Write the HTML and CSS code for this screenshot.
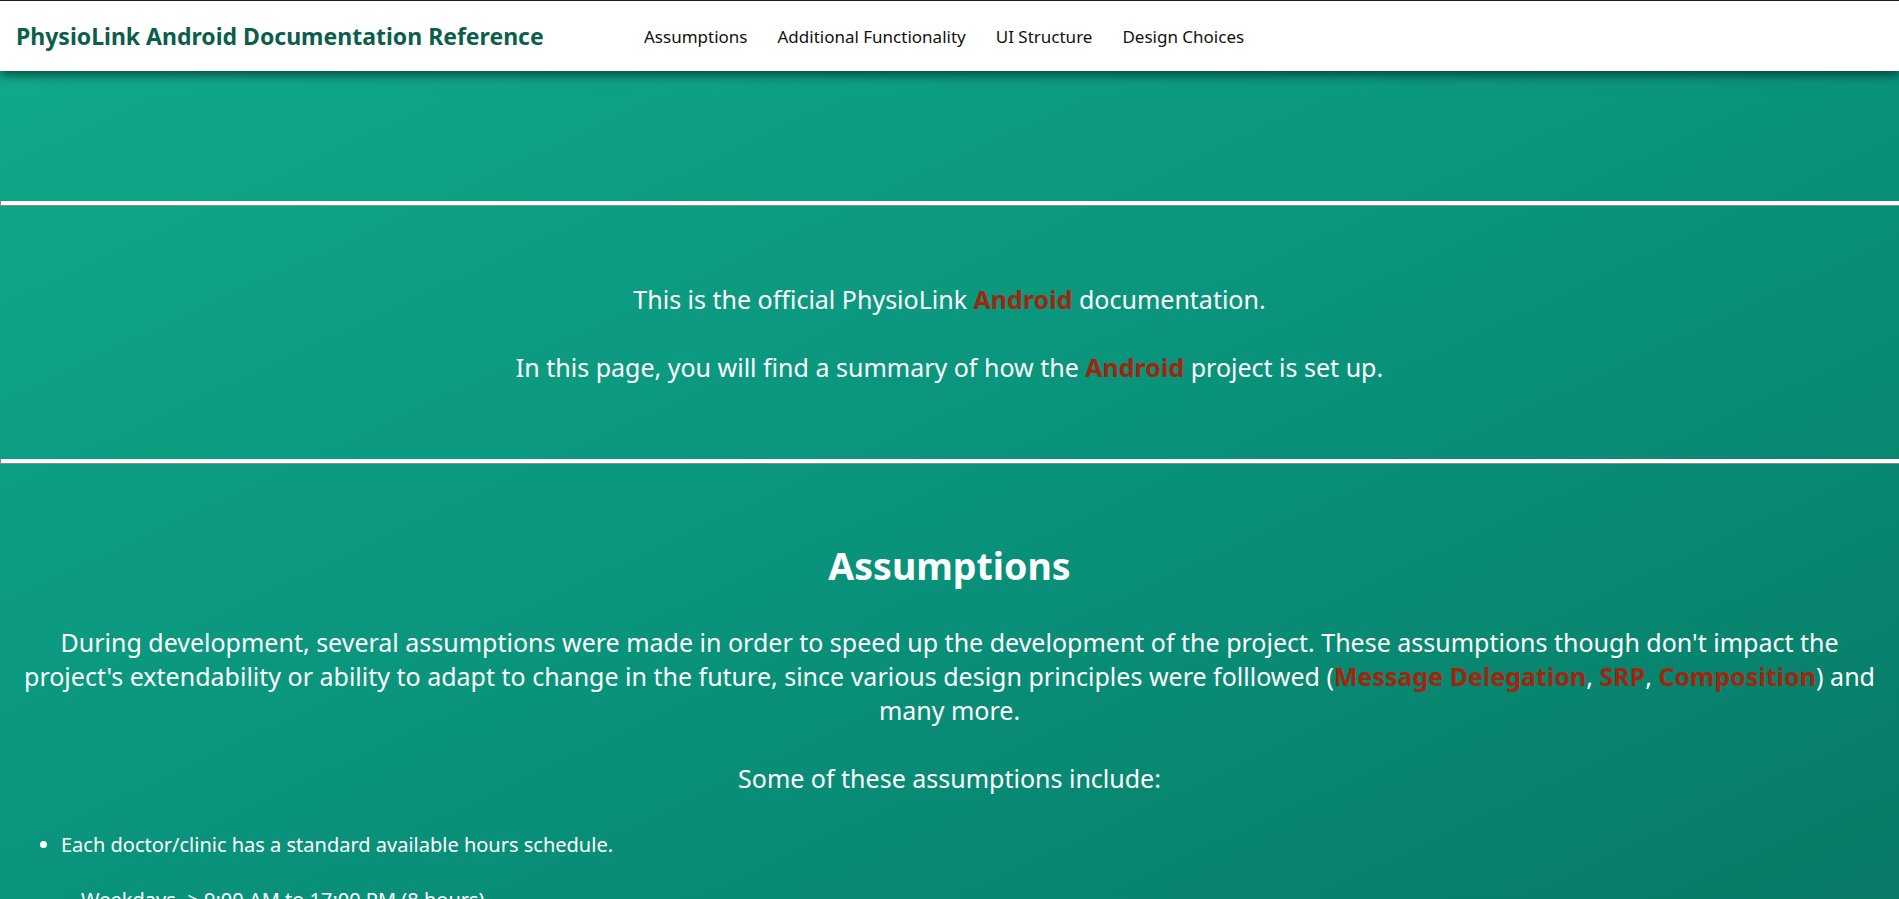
FILE: index.html
```html
<!DOCTYPE html>
<html lang="en">
<head>
<meta charset="utf-8">
<title>PhysioLink Android Documentation Reference</title>
<link rel="stylesheet" href="styles.css">
</head>
<body>
<header class="navbar">
  <div class="brand">PhysioLink Android Documentation Reference</div>
  <nav class="nav">
    <a href="#assumptions">Assumptions</a>
    <a href="#functionality">Additional Functionality</a>
    <a href="#ui">UI Structure</a>
    <a href="#design">Design Choices</a>
  </nav>
</header>
<main class="page">
  <div class="hero"></div>
  <hr class="rule">
  <section class="intro">
    <p>This is the official PhysioLink <strong class="hl">Android</strong> documentation.</p>
    <p>In this page, you will find a summary of how the <strong class="hl">Android</strong> project is set up.</p>
  </section>
  <hr class="rule">
  <section class="assumptions" id="assumptions">
    <h2>Assumptions</h2>
    <p class="lead">During development, several assumptions were made in order to speed up the development of the project. These assumptions though don't impact the project's extendability or ability to adapt to change in the future, since various design principles were folllowed (<strong class="hl">Message Delegation</strong>, <strong class="hl">SRP</strong>, <strong class="hl">Composition</strong>) and many more.</p>
    <p class="lead">Some of these assumptions include:</p>
    <ul class="list">
      <li>Each doctor/clinic has a standard available hours schedule.
        <ul class="sub">
          <li>Weekdays -&gt; 9:00 AM to 17:00 PM (8 hours)</li>
        </ul>
      </li>
    </ul>
  </section>
</main>
</body>
</html>
```
FILE: styles.css
```css
html, body {
  margin: 0;
  padding: 0;
}
body {
  font-family: "Noto Sans", "Open Sans", sans-serif;
  color: #ffffff;
  background: linear-gradient(155deg, #10ab8a 0%, #0a947c 50%, #077a66 100%);
  min-height: 100vh;
  border-top: 1px solid #1a1b22;
}
.navbar {
  display: flex;
  align-items: center;
  height: 70px;
  background: #ffffff;
  padding-left: 16px;
  box-shadow: 0 4px 10px rgba(0, 0, 0, 0.55);
  position: relative;
}
.brand {
  font-size: 23px;
  font-weight: 700;
  color: #0b5e4b;
  width: 628px;
}
.nav {
  display: flex;
  gap: 30px;
}
.nav a {
  color: #111111;
  text-decoration: none;
  font-size: 17px;
}
.hero {
  height: 130px;
}
.rule {
  margin: 0;
  height: 4px;
  border: 0;
  border-bottom: 1px solid #8a8a8a;
  border-left: 1px solid #8a8a8a;
  background: #ffffff;
}
.intro {
  text-align: center;
  height: 253px;
  display: flex;
  flex-direction: column;
  justify-content: center;
  gap: 34px;
  font-size: 25px;
}
.intro p {
  margin: 0;
  line-height: 34px;
}
.hl {
  color: #a0260e;
  font-weight: 700;
}
.assumptions {
  text-align: center;
  padding: 77px 0 0;
}
.assumptions h2 {
  margin: 0 0 34px;
  font-size: 37.5px;
  font-weight: 700;
  line-height: 50px;
}
.lead {
  font-size: 25px;
  line-height: 34px;
  margin: 0 20px 34px;
}
.list {
  text-align: left;
  font-size: 20px;
  margin: 36px 0 0;
  padding-left: 61px;
}
.list li {
  line-height: 28px;
}
.sub {
  list-style: none;
  padding-left: 20px;
  margin-top: 27px;
}
```
